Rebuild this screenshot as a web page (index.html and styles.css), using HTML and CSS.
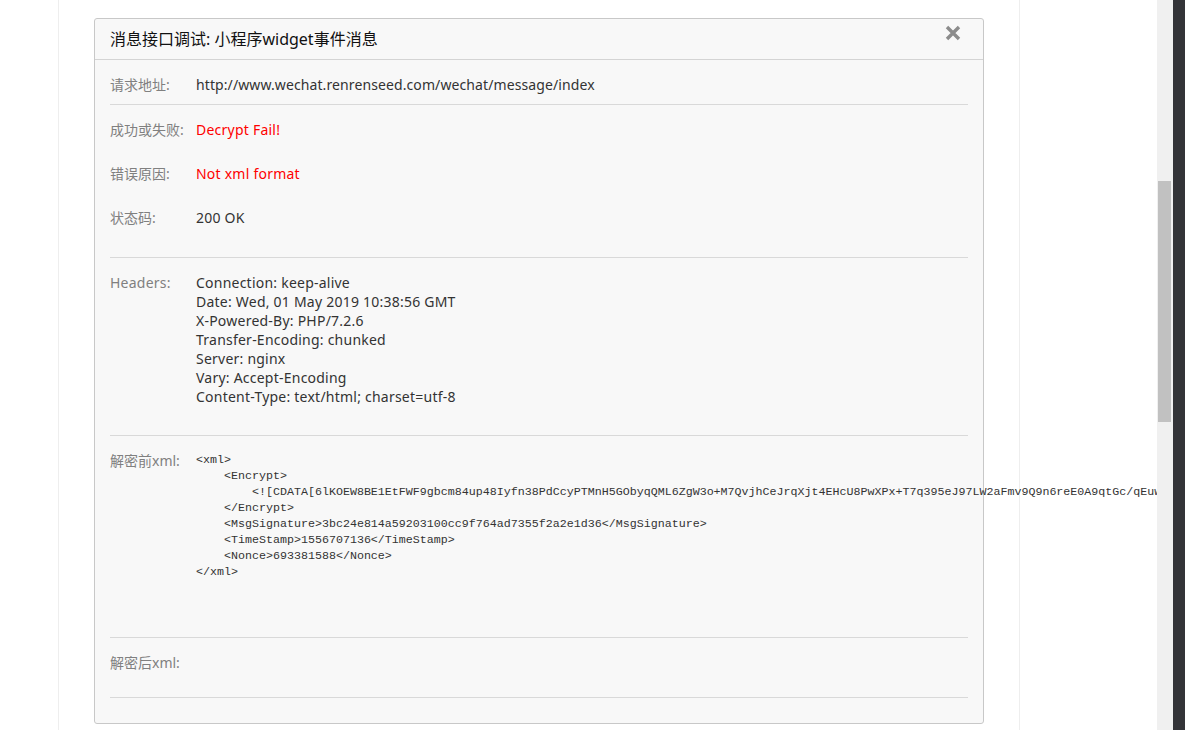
FILE: index.html
```html
<!DOCTYPE html>
<html lang="zh-CN">
<head>
<meta charset="utf-8">
<title>消息接口调试</title>
<link rel="stylesheet" href="styles.css">
</head>
<body>
<div class="viewport">
  <main class="page">
    <div class="container">
      <section class="modal">
        <header class="modal-head">
          <h2 class="modal-title">消息接口调试: 小程序widget事件消息</h2>
          <svg class="close" viewBox="0 0 16 16" width="16" height="16" aria-label="关闭"><path d="M2 2 L14 14 M14 2 L2 14"/></svg>
        </header>
        <div class="group group-url">
          <div class="row"><span class="label">请求地址:</span><span class="value url">http://www.wechat.renrenseed.com/wechat/message/index</span></div>
        </div>
        <div class="group group-status">
          <div class="row"><span class="label">成功或失败:</span><span class="value error">Decrypt Fail!</span></div>
          <div class="row"><span class="label">错误原因:</span><span class="value error">Not xml format</span></div>
          <div class="row"><span class="label">状态码:</span><span class="value">200 OK</span></div>
        </div>
        <div class="group group-headers">
          <div class="row-headers"><span class="label label-latin">Headers:</span><div class="value">Connection: keep-alive<br>Date: Wed, 01 May 2019 10:38:56 GMT<br>X-Powered-By: PHP/7.2.6<br>Transfer-Encoding: chunked<br>Server: nginx<br>Vary: Accept-Encoding<br>Content-Type: text/html; charset=utf-8</div></div>
        </div>
        <div class="group group-xml">
          <div class="row-xml"><span class="label">解密前xml:</span><pre class="xml">&lt;xml&gt;
    &lt;Encrypt&gt;
        &lt;![CDATA[6lKOEW8BE1EtFWF9gbcm84up48Iyfn38PdCcyPTMnH5GObyqQML6ZgW3o+M7QvjhCeJrqXjt4EHcU8PwXPx+T7q395eJ97LW2aFmv9Q9n6reE0A9qtGc/qEuw
    &lt;/Encrypt&gt;
    &lt;MsgSignature&gt;3bc24e814a59203100cc9f764ad7355f2a2e1d36&lt;/MsgSignature&gt;
    &lt;TimeStamp&gt;1556707136&lt;/TimeStamp&gt;
    &lt;Nonce&gt;693381588&lt;/Nonce&gt;
&lt;/xml&gt;</pre></div>
        </div>
        <div class="group group-after">
          <div class="row"><span class="label">解密后xml:</span></div>
        </div>
      </section>
    </div>
  </main>
  <div class="scrollbar"><div class="thumb"></div></div>
  <div class="edge"></div>
</div>
</body>
</html>
```

FILE: styles.css
```css
* { box-sizing: border-box; }
html, body { margin: 0; height: 100%; overflow: hidden; }
body {
  font-family: "Noto Sans", "Noto Sans CJK SC", sans-serif;
  font-size: 14px;
  color: #333;
  background: #fff;
}
.viewport { display: flex; height: 730px; overflow: hidden; }
.page { flex: 0 0 1157px; overflow: hidden; background: #fff; padding-left: 58px; }
.container {
  width: 962px;
  height: 730px;
  border-left: 1px solid #eeeeee;
  border-right: 1px solid #eeeeee;
  padding: 18px 35px 0;
}
.modal {
  width: 890px;
  height: 706px;
  background: #f8f8f8;
  border: 1px solid #c8c8c8;
  border-radius: 3px;
}
.modal-head {
  display: flex;
  justify-content: space-between;
  height: 41px;
  padding: 0 22px 0 15px;
  border-bottom: 1px solid #d4d4d4;
}
.modal-title {
  margin: 0;
  font-size: 16px;
  font-weight: 400;
  line-height: 40px;
  color: #111;
}
.close { margin-top: 6px; }
.close path { fill: none; stroke: #8c8c8c; stroke-width: 3.4; }
.group { margin: 0 15px; border-bottom: 1px solid #d9d9d9; }
.group-status { padding-bottom: 20px; }
.group-headers { padding: 15px 0 29px; }
.group-xml { padding: 16px 0 57px; }
.group-after { padding-bottom: 15px; }
.row { display: flex; height: 44px; padding-top: 15px; line-height: 20px; }
.row-headers { display: flex; line-height: 19px; }
.row-xml { display: flex; }
.row-xml .label { line-height: 18px; }
.label { flex: 0 0 86px; color: #808080; white-space: nowrap; }
.label-latin { letter-spacing: 0.23px; }
.value { color: #333; letter-spacing: 0.23px; }
.url { letter-spacing: 0.1px; }
.error { color: #ff0000; }
.xml {
  margin: 0;
  font-family: "Liberation Mono", "DejaVu Sans Mono", monospace;
  font-size: 11.67px;
  line-height: 16px;
  color: #333;
  white-space: pre;
}
.scrollbar { flex: 0 0 16px; background: #f0f0f0; padding: 181px 2px 0 1px; }
.thumb { height: 241px; background: #c1c1c1; }
.edge { flex: 1; background: #333438; }
```
